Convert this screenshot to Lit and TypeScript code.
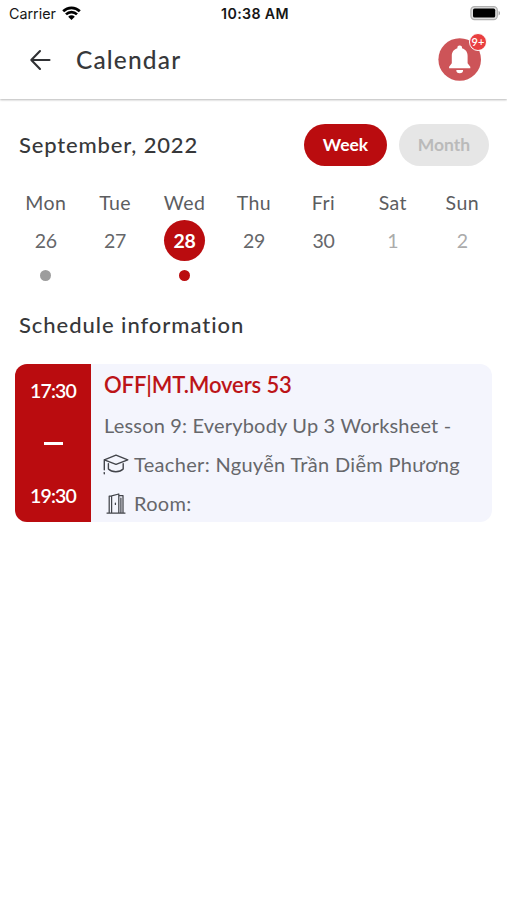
import { LitElement, html, svg, css, nothing } from "lit";
import { customElement } from "lit/decorators.js";
import { classMap } from "lit/directives/class-map.js";

interface Day {
  name: string;
  date: number;
  selected?: boolean;
  muted?: boolean;
  dot?: "grey" | "red";
}

const DAYS: Day[] = [
  { name: "Mon", date: 26, dot: "grey" },
  { name: "Tue", date: 27 },
  { name: "Wed", date: 28, selected: true, dot: "red" },
  { name: "Thu", date: 29 },
  { name: "Fri", date: 30 },
  { name: "Sat", date: 1, muted: true },
  { name: "Sun", date: 2, muted: true },
];

@customElement("status-bar")
class StatusBar extends LitElement {
  static styles = css`
    :host {
      display: grid;
      grid-template-columns: 1fr auto 1fr;
      align-items: center;
      height: 27px;
      padding: 0 6px 0 9px;
      box-sizing: border-box;
      font: 14.3px/27px "Inter", "Liberation Sans", sans-serif;
      color: #161616;
    }
    .left { display: flex; align-items: center; gap: 6px; }
    .time { font-weight: 600; font-size: 14.2px; letter-spacing: 0.35px; }
    .battery { justify-self: end; }
    svg { display: block; }
    .wifi { margin-top: -2px; }
  `;
  render() {
    return html`
      <div class="left">
        <span>Carrier</span>
        <svg class="wifi" width="19" height="14" viewBox="0 0 19 14">
          <g fill="none" stroke="#000" stroke-width="2.7">
            <path d="M1.2 5.2a11.8 11.8 0 0 1 16.6 0" />
            <path d="M4 8.4a7.8 7.8 0 0 1 11 0" />
          </g>
          <path d="M6.2 10.7a4.7 4.7 0 0 1 6.6 0L9.5 14z" fill="#000" />
        </svg>
      </div>
      <span class="time">10:38 AM</span>
      <svg class="battery" width="31" height="15" viewBox="0 0 31 15">
        <rect x="0.9" y="0.6" width="26.4" height="13" rx="3.6" fill="#e0e0e0" stroke="#b0b0b0" stroke-width="1.2" />
        <rect x="3" y="2.6" width="22.2" height="9" rx="1.6" fill="#000" />
        <path d="M28.6 5c1.8.6 1.8 3.8 0 4.4z" fill="#a0a0a0" />
      </svg>
    `;
  }
}

@customElement("nav-header")
class NavHeader extends LitElement {
  static styles = css`
    :host {
      display: flex;
      align-items: center;
      height: 72px;
      padding: 0 26px 7px 29px;
      box-sizing: border-box;
      box-shadow: 0 1px 2px rgba(0, 0, 0, 0.28);
      clip-path: inset(0 0 -6px 0);
    }
    .back { display: block; width: 22px; height: 22px; }
    .title { margin-left: 25px; font-size: 24.5px; font-weight: 500; letter-spacing: 1.15px; color: #37383a; }
    .bell { position: relative; margin-left: auto; width: 43px; height: 43px; }
    .bell svg { display: block; }
    .badge {
      position: absolute;
      top: -5.5px;
      right: -6px;
      width: 16px;
      height: 16px;
      border: 1.5px solid #fff;
      border-radius: 50%;
      background: #e93f40;
      color: #fff;
      font-size: 11px;
      font-weight: 600;
      line-height: 16px;
      text-align: center;
    }
  `;
  render() {
    return html`
      <svg class="back" viewBox="0 0 22 22" fill="none" stroke="#303134" stroke-width="2.1" stroke-linecap="round" stroke-linejoin="round">
        <path d="M20.5 11H2.3M11 2L2.3 11l8.7 9" />
      </svg>
      <span class="title">Calendar</span>
      <div class="bell">
        <svg width="43" height="43" viewBox="0 0 43 43">
          <circle cx="21.7" cy="21.5" r="21.3" fill="#cd5458" />
          <path d="M21.7 7.6a2.3 2.3 0 0 1 2.3 2.6c3.8 1.1 5.6 4 5.6 7.6v7.4l2.7 3.6v1.4H11.1v-1.4l2.7-3.6v-7.4c0-3.6 1.8-6.5 5.6-7.6a2.3 2.3 0 0 1 2.3-2.6zM18.3 32h6.8a3.4 3.3 0 0 1-6.8 0z" fill="#fff" />
        </svg>
        <span class="badge">9+</span>
      </div>
    `;
  }
}

@customElement("week-strip")
class WeekStrip extends LitElement {
  static styles = css`
    :host { display: grid; grid-template-columns: repeat(7, 1fr); padding: 0 10px 0 11px; }
    .day { display: flex; flex-direction: column; align-items: center; }
    .name { height: 32px; line-height: 34px; font-size: 19.5px; letter-spacing: 0.4px; color: #5c5d5f; }
    .date {
      width: 41px;
      height: 41px;
      margin-top: 2px;
      line-height: 41px;
      border-radius: 50%;
      text-align: center;
      font-size: 19.5px;
      letter-spacing: -0.3px;
      color: #66676a;
    }
    .selected { background: #ba0c0f; color: #fff; font-weight: 700; }
    .muted { color: #ababab; }
    .dot { width: 11px; height: 11px; margin-top: 9px; border-radius: 50%; }
    .grey { background: #9d9d9d; }
    .red { background: #ba0c0f; }
  `;
  render() {
    return DAYS.map(
      (d) => html`
        <div class="day">
          <span class="name">${d.name}</span>
          <span class=${classMap({ date: true, selected: !!d.selected, muted: !!d.muted })}>${d.date}</span>
          ${d.dot ? html`<span class="dot ${d.dot}"></span>` : nothing}
        </div>
      `,
    );
  }
}

const capIcon = svg`
  <path d="M1.3 5.8L13 1.2 24.8 5.8 13 10.4zM1.3 5.8v10M5.4 9.6v5.4c3.4 3.6 11.4 3.6 14.8 0V9.6" />
  <path d="M1.3 18.6v1.2" />
`;
const doorIcon = svg`
  <path d="M3.2 19.8V3H5.6M5.6 19.8V2.8L12.8 1v18.8M12.8 2.6h4.2v17.2M1 20h18M14.9 5v14.8" />
  <path d="M9.4 10v1.4" />
`;

@customElement("schedule-card")
class ScheduleCard extends LitElement {
  static styles = css`
    :host { display: flex; height: 158px; border-radius: 12px; overflow: hidden; background: #f4f5fd; }
    .times {
      width: 76px;
      display: flex;
      flex-direction: column;
      align-items: center;
      justify-content: space-between;
      padding: 13px 0 12px;
      box-sizing: border-box;
      background: #ba0c0f;
      color: #fff;
      font-size: 19.5px;
      font-weight: 600;
      letter-spacing: -0.8px;
      line-height: 28px;
    }
    .bar { width: 19px; height: 2.5px; background: #fff; }
    .info { flex: 1; padding-left: 13px; color: #66676b; font-size: 20px; white-space: nowrap; }
    .title { height: 42px; line-height: 42px; font-size: 22px; font-weight: 600; letter-spacing: -0.12px; color: #bc1418; }
    .row { display: flex; align-items: center; height: 39px; line-height: 39px; }
    .lesson { letter-spacing: 0.18px; }
    .teacher { letter-spacing: 0.32px; }
    .icon { width: 26px; height: 22px; margin-right: 5px; margin-left: -1px; }
    svg { display: block; fill: none; stroke: #43454b; stroke-width: 1.4; stroke-linejoin: round; stroke-linecap: round; }
    .door { padding-left: 3px; box-sizing: border-box; }
    .door svg { stroke-width: 1.25; }
  `;
  render() {
    return html`
      <div class="times"><span>17:30</span><span class="bar"></span><span>19:30</span></div>
      <div class="info">
        <div class="title">OFF|MT.Movers 53</div>
        <div class="row lesson">Lesson 9: Everybody Up 3 Worksheet -</div>
        <div class="row">
          <div class="icon"><svg width="26" height="22" viewBox="0 0 26 22">${capIcon}</svg></div>
          <span class="teacher">Teacher: Nguyễn Trần Diễm Phương</span>
        </div>
        <div class="row">
          <div class="icon door"><svg width="20" height="22" viewBox="0 0 20 22">${doorIcon}</svg></div>
          <span class="teacher">Room:</span>
        </div>
      </div>
    `;
  }
}

@customElement("app-root")
class AppRoot extends LitElement {
  static styles = css`
    :host {
      display: block;
      height: 900px;
      background: #fff;
      font-family: "Lato", "Open Sans", sans-serif;
    }
    .toolbar { display: flex; align-items: center; height: 42px; margin-top: 25px; padding: 0 18px 0 19px; }
    .month { flex: 1; height: 42px; line-height: 42px; font-size: 22px; font-weight: 500; letter-spacing: 0.85px; color: #37383a; }
    .pill {
      height: 42px;
      line-height: 42px;
      border-radius: 21px;
      text-align: center;
      font-size: 17.5px;
      font-weight: 700;
    }
    .week { width: 83px; margin-right: 12px; background: #ba0c0f; color: #fff; }
    .all { width: 90px; background: #e6e6e6; color: #bababa; }
    week-strip { margin-top: 20px; height: 112px; }
    .section { margin: 8px 0 0 19px; height: 38px; line-height: 38px; font-size: 22px; font-weight: 500; letter-spacing: 0.95px; color: #37383a; }
    schedule-card { margin: 20px 15px 0; }
  `;
  render() {
    return html`
      <status-bar></status-bar>
      <nav-header></nav-header>
      <div class="toolbar">
        <span class="month">September, 2022</span>
        <span class="pill week">Week</span>
        <span class="pill all">Month</span>
      </div>
      <week-strip></week-strip>
      <div class="section">Schedule information</div>
      <schedule-card></schedule-card>
    `;
  }
}
